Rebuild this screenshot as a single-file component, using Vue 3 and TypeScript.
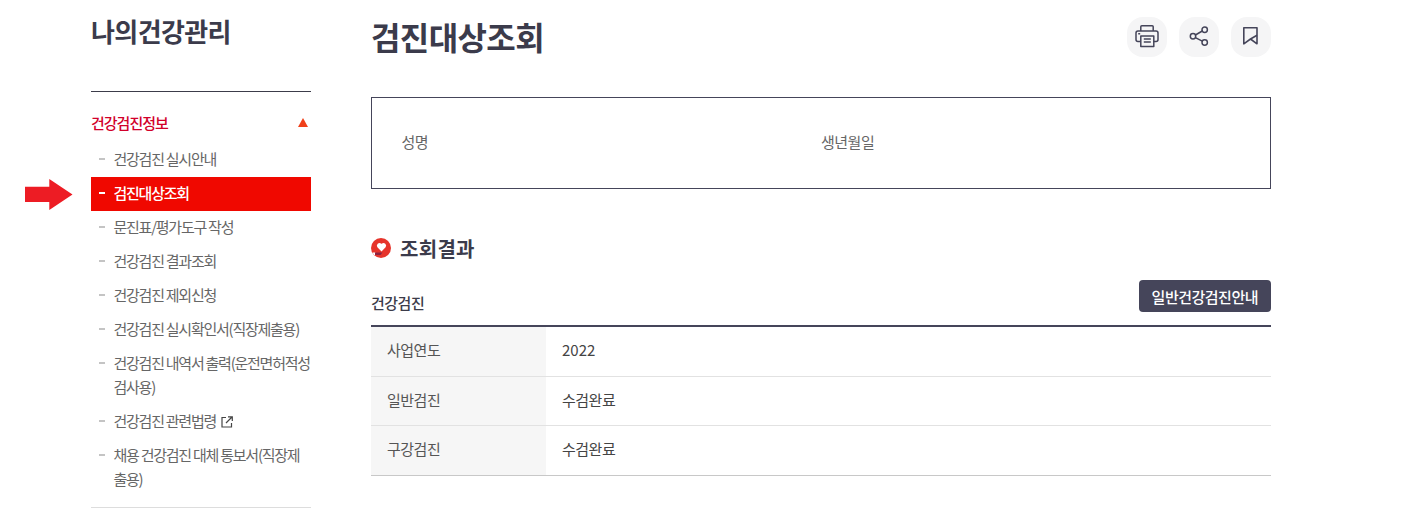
<script setup lang="ts">
interface MenuItem { label: string; active?: boolean; external?: boolean }
const items: MenuItem[] = [
  { label: '건강검진 실시안내' },
  { label: '검진대상조회', active: true },
  { label: '문진표/평가도구 작성' },
  { label: '건강검진 결과조회' },
  { label: '건강검진 제외신청' },
  { label: '건강검진 실시확인서(직장제출용)' },
  { label: '건강검진 내역서 출력(운전면허적성검사용)' },
  { label: '건강검진 관련법령', external: true },
  { label: '채용 건강검진 대체 통보서(직장제출용)' },
]
const rows = [
  { th: '사업연도', td: '2022' },
  { th: '일반검진', td: '수검완료' },
  { th: '구강검진', td: '수검완료' },
]
</script>

<template>
  <div class="page">
    <aside class="side">
      <h2 class="side-title">나의건강관리</h2>
      <div class="side-head">
        <span>건강검진정보</span>
        <i class="tri"></i>
      </div>
      <ul class="menu">
        <li v-for="it in items" :key="it.label" :class="{ active: it.active }">
          <svg v-if="it.active" class="arrow" width="48" height="31" viewBox="0 0 48 31">
            <path d="M0 7.700H24.300V0L47.500 15.500 24.300 31V23H0Z" fill="#ed1c24" />
          </svg>
          <span class="dash"></span>
          <span class="label">{{ it.label }}<svg v-if="it.external" class="ext" width="12" height="12" viewBox="0 0 12 12" fill="none" stroke="#444" stroke-width="1.200"><path d="M5 1.500H1V11H10.500V7" /><path d="M5 7 11 1M7 .8H11.300V5" /></svg></span>
        </li>
      </ul>
      <div class="side-end"></div>
    </aside>

    <main class="main">
      <header class="top">
        <h1>검진대상조회</h1>
        <div class="tools">
          <button class="tool" aria-label="인쇄">
            <svg width="24" height="24" viewBox="0 0 24 24" fill="none" stroke="#45455a" stroke-width="1.500" stroke-linejoin="round">
              <path d="M5.800 6V1.800a1 1 0 0 1 1-1h10.400a1 1 0 0 1 1 1V6" />
              <path d="M5.800 16.500H3a2 2 0 0 1-2-2V8a2 2 0 0 1 2-2h18a2 2 0 0 1 2 2v6.500a2 2 0 0 1-2 2h-2.800" />
              <path d="M5.800 11h13v10.500h-13z" />
              <path d="M8.800 14h7M8.800 17h7M3.200 8.800h2" />
            </svg>
          </button>
          <button class="tool" aria-label="공유">
            <svg width="24" height="24" viewBox="0 0 24 24" fill="none" stroke="#45455a" stroke-width="1.500">
              <circle cx="17.700" cy="4.700" r="2.700" />
              <circle cx="17.700" cy="17.500" r="2.700" />
              <circle cx="6" cy="11.300" r="2.700" />
              <path d="M8.400 10 15.300 6M8.400 12.600 15.300 16.200" />
            </svg>
          </button>
          <button class="tool" aria-label="즐겨찾기">
            <svg width="24" height="24" viewBox="0 0 24 24" fill="none" stroke="#45455a" stroke-width="1.600" stroke-linejoin="round">
              <path d="M4.800 2.800H18V18.800L11.500 14 4.800 18.800Z" />
              <path d="M18 10.300 11.500 14" />
            </svg>
          </button>
        </div>
      </header>

      <section class="info">
        <div class="info-col first">성명</div>
        <div class="info-col">생년월일</div>
      </section>

      <h3 class="sec">
        <svg width="20" height="20" viewBox="0 0 20 20">
          <circle cx="10" cy="10" r="10" fill="#e6342b" />
          <path d="M10.500 13.500 6.400 9.300a2.700 2.700 0 0 1 3.700-3.800l.4.400.4-.4a2.700 2.700 0 0 1 3.700 3.800Z" fill="#fff" />
          <path d="M1.500 14.500h3v2.500h-1.500z" fill="#fff" />
          <path d="M4 14.500h7.500l-2 2.500H4z" fill="#8c2240" />
        </svg>
        조회결과
      </h3>

      <div class="sub">
        <h4>건강검진</h4>
        <button class="guide">일반건강검진안내</button>
      </div>

      <table class="result">
        <tbody>
          <tr v-for="r in rows" :key="r.th">
            <th>{{ r.th }}</th>
            <td>{{ r.td }}</td>
          </tr>
        </tbody>
      </table>
    </main>
  </div>
</template>

<style>
html, body { margin: 0; background: #fff; overflow: hidden; }
</style>

<style scoped>
.page {
  display: flex;
  gap: 60px;
  padding-left: 91px;
  width: 1180px;
  height: 526px;
  overflow: hidden;
  font-family: "Noto Sans CJK KR", "Noto Sans", sans-serif;
  color: #3c3c4a;
}
.side { width: 220px; flex: none; }
.side-title {
  margin: 0;
  padding: 11px 0 40px;
  height: 40px;
  line-height: 40px;
  font-size: 26px;
  font-weight: 700;
  letter-spacing: -0.6px;
  color: #3b3b4b;
  border-bottom: 1px solid #3c3c4a;
}
.side-head {
  display: flex;
  justify-content: space-between;
  align-items: center;
  height: 24px;
  margin-top: 18px;
  font-size: 15px;
  font-weight: 500;
  letter-spacing: -1px;
  color: #d2002a;
}
.tri {
  width: 0;
  height: 0;
  margin-right: 3px;
  border-left: 5px solid transparent;
  border-right: 5px solid transparent;
  border-bottom: 9px solid #f0401a;
}
.menu { list-style: none; margin: 9px 0 0; padding: 0; }
.menu li {
  position: relative;
  display: flex;
  padding: 4px 0 6px 22.500px;
  font-size: 15px;
  line-height: 24px;
  letter-spacing: -1.250px;
  color: #666;
}
.menu li.active { background: #f00800; color: #fff; font-weight: 500; }
.dash {
  position: absolute;
  left: 8px;
  top: 15px;
  width: 6px;
  height: 2px;
  background: #c4c4c4;
}
.active .dash { background: #fff; }
.arrow { position: absolute; left: -66px; top: 2px; }
.ext { margin-left: 5px; vertical-align: -1px; }
.side-end { margin-top: 10px; border-top: 1px solid #ddd; }

.main { width: 900px; flex: none; }
.top { display: flex; justify-content: space-between; align-items: flex-start; height: 97px; }
.top h1 {
  margin: 12px 0 0;
  font-size: 32px;
  line-height: 48px;
  font-weight: 700;
  letter-spacing: -0.6px;
  color: #3b3b4b;
}
.tools { display: flex; gap: 12px; margin-top: 17px; }
.tool {
  display: flex;
  align-items: center;
  justify-content: center;
  width: 40px;
  height: 40px;
  padding: 0;
  border: 0;
  border-radius: 16px;
  background: #f5f5f6;
}
.info {
  display: flex;
  align-items: center;
  height: 90px;
  border: 1px solid #45455a;
  font-size: 15px;
  line-height: 18px;
  color: #666;
  letter-spacing: -0.5px;
}
.info-col { margin-top: -3px; }
.info-col.first { width: 449px; padding-left: 29.500px; box-sizing: border-box; }
.sec {
  display: flex;
  align-items: center;
  gap: 9px;
  margin: 45px 0 0;
  height: 28px;
  padding-bottom: 2px;
  font-size: 20px;
  font-weight: 700;
  letter-spacing: 0.3px;
  color: #3b3b4b;
}
.sub {
  display: flex;
  justify-content: space-between;
  align-items: flex-start;
  height: 32px;
  margin-top: 16px;
  padding-bottom: 13px;
}
.sub h4 { margin: 12px 0 0; font-size: 15px; line-height: 22px; font-weight: 500; letter-spacing: -0.5px; color: #3c3c4a; }
.guide {
  height: 32px;
  padding: 0 13px;
  border: 0;
  border-radius: 4px;
  background: #45455a;
  color: #fff;
  font: 500 15px "Noto Sans CJK KR", sans-serif;
  letter-spacing: -0.5px;
}
.result {
  width: 100%;
  border-collapse: collapse;
  border-top: 2px solid #45455a;
  border-bottom: 1px solid #c8c8c8;
  font-size: 15px;
  color: #444;
}
.result tr + tr th, .result tr + tr td { border-top: 1px solid #e2e2e2; }
.result th, .result td {
  height: 49px;
  padding: 0 0 3px 16px;
  box-sizing: border-box;
}
.result tr:first-child th, .result tr:first-child td,
.result tr:last-child th, .result tr:last-child td { height: 50px; }
.result th {
  width: 175px;
  background: #f6f6f6;
  text-align: left;
  font-weight: 400;
  color: #555;
  letter-spacing: -0.5px;
}
.result td { letter-spacing: -0.5px; }
.result tr:first-child td { letter-spacing: 0; }
</style>
